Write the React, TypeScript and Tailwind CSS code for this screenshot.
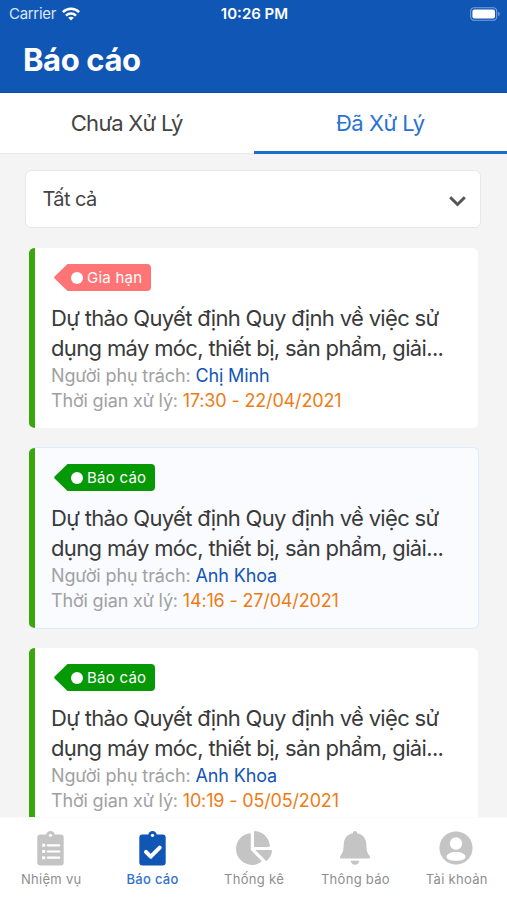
import type { ReactNode } from "react";
import { FaChartPie } from "react-icons/fa";

type Report = {
  tag: string;
  tone: "red" | "green";
  person: string;
  time: string;
  highlighted?: boolean;
};

const reports: Report[] = [
  { tag: "Gia hạn", tone: "red", person: "Chị Minh", time: "17:30 - 22/04/2021" },
  { tag: "Báo cáo", tone: "green", person: "Anh Khoa", time: "14:16 - 27/04/2021", highlighted: true },
  { tag: "Báo cáo", tone: "green", person: "Anh Khoa", time: "10:19 - 05/05/2021" },
];

function WifiIcon() {
  return (
    <svg width="18" height="14" viewBox="0 0 18 14" fill="none" stroke="white" strokeWidth="2.5">
      <path d="M.9 5.1C5.4.7 12.600.7 17.100 5.100" />
      <path d="M4 8.600c2.800-2.700 7.200-2.700 10 0" />
      <path d="M6.200 10.700c1.600-1.400 4-1.400 5.600 0L9 13.600Z" fill="white" stroke="none" />
    </svg>
  );
}

function BatteryIcon() {
  return (
    <svg width="30" height="14" viewBox="0 0 30 14">
      <rect x=".7" y=".7" width="26" height="12.6" rx="3.6" fill="none" stroke="#7ba0d8" strokeWidth="1.1" />
      <rect x="2.4" y="2.4" width="22.6" height="9.2" rx="2" fill="white" />
      <path d="M28.2 4.8c2 .9 2 3.5 0 4.4Z" fill="#7ba0d8" />
    </svg>
  );
}

function Clipboard({ children }: { children: ReactNode }) {
  return (
    <svg width="27" height="35" viewBox="0 0 27 35" fill="none">
      <rect x=".3" y="3.500" width="26.400" height="31" rx="3" fill="currentColor" />
      <circle cx="13.500" cy="4.300" r="4.200" fill="currentColor" />
      <circle cx="13.500" cy="4.300" r="1.600" fill="white" />
      {children}
    </svg>
  );
}

function ListIcon() {
  return (
    <Clipboard>
      <path d="M5.200 14.300h3M5.200 20.500h3M5.200 26.700h3" stroke="white" strokeWidth="3" />
      <path d="M10.800 14.300h11.500M10.800 20.500h11.500M10.800 26.700h11.500" stroke="white" strokeWidth="2.200" strokeLinecap="round" />
    </Clipboard>
  );
}

function CheckIcon() {
  return (
    <Clipboard>
      <path d="m7 20.900 4.700 4.800 9-9" stroke="white" strokeWidth="4" strokeLinecap="round" strokeLinejoin="round" />
    </Clipboard>
  );
}

function BellIcon() {
  return (
    <svg width="30" height="34" viewBox="0 0 30 34" fill="currentColor">
      <path d="M15 0c1.300 0 2 .8 2.200 2.300 5.300 1.100 8.700 4.900 9.100 10.700.3 5.500.4 8.300 3.200 11.800.9 1.200.7 2.700-.8 2.700H1.300c-1.500 0-1.700-1.500-.8-2.700 2.800-3.500 2.900-6.300 3.200-11.800.4-5.800 3.800-9.600 9.100-10.700C13 .8 13.700 0 15 0Z" />
      <path d="M10.700 29.800h8.600c-.4 2.500-2 4-4.300 4s-3.900-1.500-4.300-4Z" />
    </svg>
  );
}

function ContactIcon() {
  return (
    <svg width="34" height="34" viewBox="0 0 34 34">
      <circle cx="17" cy="17" r="16.600" fill="currentColor" />
      <circle cx="17" cy="12.500" r="6.200" fill="white" />
      <path d="M7.500 26c0-3 4.200-5 9.500-5s9.500 2 9.500 5c0 2.300-4.200 3.800-9.500 3.800S7.500 28.300 7.500 26Z" fill="white" />
    </svg>
  );
}

function Tag({ tone, children }: { tone: Report["tone"]; children: ReactNode }) {
  const red = tone === "red";
  return (
    <div className="flex h-[27px]">
      <svg width="14" height="27" viewBox="0 0 14 27" className={red ? "text-[#ff7474]" : "text-[#069906]"}>
        <path d="M14 0h-.5L.6 12.600q-.6.900 0 1.800L13.500 27h.5Z" fill="currentColor" />
      </svg>
      <div
        className={`flex items-center rounded-r-[4px] pl-[3px] text-[15px] text-white ${
          red ? "w-[83px] bg-[#ff7474]" : "w-[87px] bg-[#069906]"
        }`}
      >
        <span className="mr-[4px] size-[12px] shrink-0 rounded-full bg-white" />
        <span className="pt-[2px] whitespace-nowrap tracking-[0.25px]">{children}</span>
      </div>
    </div>
  );
}

function ReportCard({ report }: { report: Report }) {
  return (
    <article
      className={`flex h-[182px] shrink-0 overflow-hidden rounded-[6px] border border-l-0 ${
        report.highlighted ? "border-[#deebfc] bg-[#f9fbff]" : "border-[#f4f4f4] bg-white bg-clip-padding"
      }`}
    >
      <div className="-my-px w-[6px] shrink-0 bg-[#39a60c]" />
      <div className="flex flex-col pt-[16px] pl-[16px]">
        <div className="pl-[3px]">
          <Tag tone={report.tone}>{report.tag}</Tag>
        </div>
        <h2 className="mt-[13px] text-[22px] leading-[29.5px] whitespace-nowrap text-[#3a3a3a]">
          <span className="block tracking-[-0.67px]">Dự thảo Quyết định Quy định về việc sử</span>
          <span className="block tracking-[-0.65px]">dụng máy móc, thiết bị, sản phẩm, giải...</span>
        </h2>
        <p className="mt-px text-[18px] leading-[24.5px] tracking-[-0.13px] whitespace-nowrap text-[#a1a1a1]">
          Người phụ trách: <span className="text-[#1256b4]">{report.person}</span>
        </p>
        <p className="text-[18px] leading-[24.5px] tracking-[-0.16px] whitespace-nowrap text-[#a1a1a1]">
          Thời gian xử lý: <span className="text-[#ee7c14]">{report.time}</span>
        </p>
      </div>
    </article>
  );
}

function NavItem({ icon, label, active }: { icon: ReactNode; label: string; active?: boolean }) {
  return (
    <div className={`flex flex-1 flex-col items-center ${active ? "text-[#1056b4]" : "text-[#c4c4c4]"}`}>
      <div className="flex h-[36px] items-center">{icon}</div>
      <span
        className={`mt-[4px] pl-px text-[13px] leading-[18px] whitespace-nowrap tracking-[0.3px] ${
          active ? "font-medium text-[#3272cc]" : "text-[#8e8e8e]"
        }`}
      >
        {label}
      </span>
    </div>
  );
}

export default function App() {
  return (
    <div className="flex h-[900px] w-[507px] flex-col overflow-hidden bg-[#f4f4f4] font-['Inter','Noto_Sans',sans-serif]">
      <header className="h-[93px] shrink-0 border-b border-[#0d4ca3] bg-[#1056b4] text-white">
        <div className="grid h-[27px] grid-cols-3 items-center pr-[7px] pl-[9px] text-[15px]">
          <div className="flex items-center gap-[6px]">
            <span className="pt-px tracking-[-0.3px] text-[#dce7f7]">Carrier</span>
            <WifiIcon />
          </div>
          <span className="pt-px text-center font-semibold">10:26 PM</span>
          <div className="flex justify-end">
            <BatteryIcon />
          </div>
        </div>
        <h1 className="mt-[13px] pl-[23px] text-[31px] leading-[40px] font-bold tracking-[-0.4px]">Báo cáo</h1>
      </header>
      <nav className="flex h-[61px] shrink-0 bg-white text-[22px] leading-[61px]">
        <div className="flex-1 border-b border-[#e9e9e9] text-center tracking-[-0.75px] text-[#444]">Chưa Xử Lý</div>
        <div className="flex-1 border-b-[3px] border-[#1a6dcc] text-center tracking-[-0.5px] text-[#2873d2]">Đã Xử Lý</div>
      </nav>
      <main className="flex min-h-0 flex-1 flex-col overflow-hidden pt-[16px]">
        <div className="mr-[26px] ml-[25px] flex h-[58px] shrink-0 items-center justify-between rounded-[6px] border border-[#e7e7e7] bg-white pr-[14px] pl-[16.5px] text-[20px] text-[#444]">
          <span className="tracking-[-0.6px]">Tất cả</span>
          <svg width="17" height="11" viewBox="0 0 17 11" fill="none" stroke="#555" strokeWidth="3" className="mt-[5px]">
            <path d="m1.200 1.200 7.300 7.300 7.300-7.300" />
          </svg>
        </div>
        <div className="mt-[19px] mr-[28px] ml-[29px] flex flex-col gap-[18px]">
          {reports.map((report) => (
            <ReportCard key={report.time} report={report} />
          ))}
        </div>
      </main>
      <footer className="flex h-[83px] shrink-0 border-t border-[#fafafa] bg-white pt-[12px]">
        <NavItem icon={<ListIcon />} label="Nhiệm vụ" />
        <NavItem icon={<CheckIcon />} label="Báo cáo" active />
        <NavItem icon={<FaChartPie size={36} />} label="Thống kê" />
        <NavItem icon={<BellIcon />} label="Thông báo" />
        <NavItem icon={<ContactIcon />} label="Tài khoản" />
      </footer>
    </div>
  );
}
